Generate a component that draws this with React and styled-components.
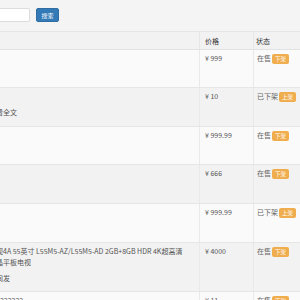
import React from 'react';
import styled, { createGlobalStyle } from 'styled-components';

const GlobalStyle = createGlobalStyle`
    html, body {
        margin: 0;
        padding: 0;
        background: #fafafa;
        overflow: hidden;
    }
    body {
        font-family: "Noto Sans CJK SC", "Noto Sans", sans-serif;
        font-size: 7px;
        color: #555;
    }
`

const products = [
    { id: 1, price: '999', onSale: true, height: 38, lines: [], desc: '' },
    { id: 2, price: '10', onSale: false, height: 39, lines: [], desc: '看全文' },
    { id: 3, price: '999.99', onSale: true, height: 38, lines: [], desc: '' },
    { id: 4, price: '666', onSale: true, height: 39, lines: [], desc: '' },
    { id: 5, price: '999.99', onSale: false, height: 39, lines: [], desc: '' },
    {
        id: 6, price: '4000', onSale: true, height: 49,
        lines: ['视4A 55英寸 L55M5-AZ/L55M5-AD 2GB+8GB HDR 4K超高清', '晶平板电视'],
        desc: '间发',
    },
    { id: 7, price: '11', onSale: true, height: 30, lines: ['1222222'], desc: '' },
]

function App() {
    return (
        <Page>
            <GlobalStyle />
            <Toolbar>
                <SearchInput />
                <SearchButton>搜索</SearchButton>
            </Toolbar>

            <HeadRow>
                <HeadCell />
                <HeadCell>价格</HeadCell>
                <HeadCell>状态</HeadCell>
            </HeadRow>

            {products.map((p, i) => (
                <Row key={p.id} striped={i % 2 === 1} h={p.height}>
                    <NameCell>
                        {p.lines.map((l) => <NameLine key={l}>{l}</NameLine>)}
                        {p.desc && <Desc first={p.lines.length === 0}>{p.desc}</Desc>}
                    </NameCell>
                    <Cell>¥ {p.price}</Cell>
                    <Cell>
                        <Status>
                            {p.onSale ? '在售' : '已下架'}
                            <Badge>{p.onSale ? '下架' : '上架'}</Badge>
                        </Status>
                    </Cell>
                </Row>
            ))}
        </Page>
    )
}

export default App

const Page = styled.div`
    width: 300px;
    height: 300px;
    overflow: hidden;
`

const Toolbar = styled.div`
    background: #f4f4f4;
    border-bottom: 1px solid #e6e6e6;
    display: flex;
    align-items: flex-start;
    padding-top: 8px;
    box-sizing: border-box;
    height: 32px;
`

const SearchInput = styled.div`
    width: 32px;
    height: 14px;
    margin-left: -2px;
    background: #fff;
    border: 1px solid #dcdcdc;
    border-radius: 2px;
    box-sizing: border-box;
`

const SearchButton = styled.div`
    width: 23px;
    height: 14px;
    margin-left: 6px;
    background: #337ab7;
    border: 1px solid #2e6da4;
    border-radius: 2px;
    box-sizing: border-box;
    color: #fff;
    font-size: 6px;
    display: flex;
    align-items: center;
    justify-content: center;
`

const Grid = styled.div`
    display: grid;
    grid-template-columns: 200px 54px 60px;
    box-sizing: border-box;
`

const HeadRow = styled(Grid)`
    height: 18px;
    background: #f2f2f2;
    border-bottom: 1px solid #e2e2e2;
`

const HeadCell = styled.div`
    border-right: 1px solid #e6e6e6;
    padding-left: 5px;
    display: flex;
    align-items: center;
    color: #333;
    &:last-child {
        border-right: none;
        padding-left: 2px;
    }
`

const Row = styled(Grid)`
    height: ${props => props.h}px;
    background: ${props => props.striped ? '#f2f2f2' : '#fafafa'};
    border-bottom: 1px solid #e6e6e6;
`

const Cell = styled.div`
    border-right: 1px solid #e9e9e9;
    padding: 3px 5px 0;
    line-height: 11px;
    color: #555;
    white-space: nowrap;
    &:last-child {
        border-right: none;
        padding-left: 3px;
    }
`

const NameCell = styled(Cell)`
    overflow: hidden;
    padding-left: 0;
    padding-right: 0;
`

const NameLine = styled.div`
    white-space: nowrap;
    text-indent: -4px;
`

const Desc = styled(NameLine)`
    margin-top: ${props => props.first ? '16px' : '5px'};
`

const Status = styled.div`
    display: flex;
    align-items: center;
    color: #666;
    white-space: nowrap;
`

const Badge = styled.span`
    flex-shrink: 0;
    margin-left: 1px;
    background: #f0ad4e;
    color: #fff;
    font-size: 5.5px;
    height: 10px;
    line-height: 10px;
    padding: 0 3px;
    border-radius: 2px;
`
